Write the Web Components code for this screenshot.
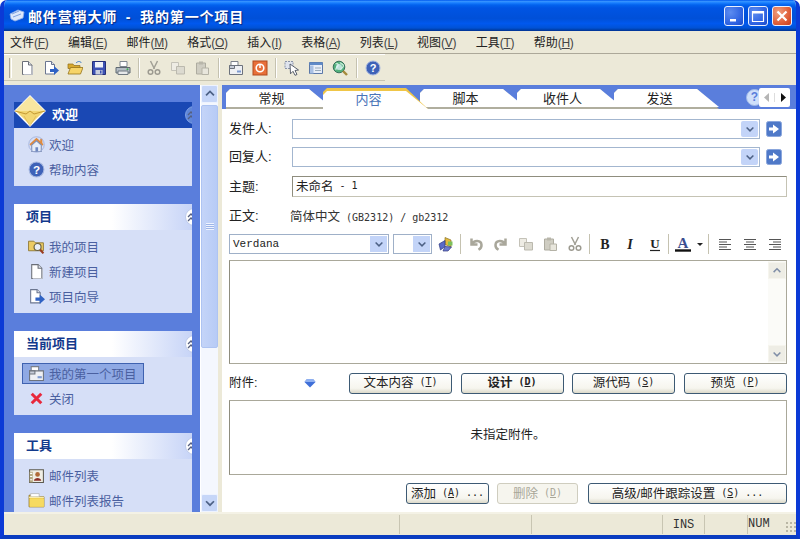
<!DOCTYPE html>
<html lang="zh">
<head>
<meta charset="utf-8">
<title>邮件营销大师</title>
<style>
html,body{margin:0;height:100%;overflow:hidden;background:#fff}
body{font:12px "Liberation Sans","Noto Sans CJK SC",sans-serif;color:#222}
.latin{font:10px "DejaVu Sans Mono",monospace;white-space:pre}
</style>
</head>
<body>
<xp-window>
  <xp-titlebar>邮件营销大师 - 我的第一个项目</xp-titlebar>
  <xp-menubar>
    <xp-menu key="F">文件</xp-menu><xp-menu key="E">编辑</xp-menu><xp-menu key="M">邮件</xp-menu>
    <xp-menu key="O">格式</xp-menu><xp-menu key="I">插入</xp-menu><xp-menu key="A">表格</xp-menu>
    <xp-menu key="L">列表</xp-menu><xp-menu key="V">视图</xp-menu><xp-menu key="T">工具</xp-menu>
    <xp-menu key="H">帮助</xp-menu>
  </xp-menubar>
  <xp-toolbar>
    <xp-tool icon="page"></xp-tool><xp-tool icon="pagenext"></xp-tool><xp-tool icon="open"></xp-tool><xp-tool icon="save"></xp-tool><xp-tool icon="print"></xp-tool>
    <xp-sep w="7"></xp-sep>
    <xp-tool icon="cut"></xp-tool><xp-tool icon="copy"></xp-tool><xp-tool icon="paste"></xp-tool>
    <xp-sep w="10"></xp-sep>
    <xp-tool icon="project"></xp-tool><xp-tool icon="stop"></xp-tool>
    <xp-sep w="8"></xp-sep>
    <xp-tool icon="pointer"></xp-tool><xp-tool icon="panel"></xp-tool><xp-tool icon="globe"></xp-tool>
    <xp-sep w="9"></xp-sep>
    <xp-tool icon="help"></xp-tool>
  </xp-toolbar>
  <xp-split>
    <xp-sidebar slot="side">
      <xp-panel label="欢迎" primary>
        <xp-task icon="home">欢迎</xp-task>
        <xp-task icon="help">帮助内容</xp-task>
      </xp-panel>
      <xp-panel label="项目">
        <xp-task icon="foldersearch">我的项目</xp-task>
        <xp-task icon="page">新建项目</xp-task>
        <xp-task icon="pagenext">项目向导</xp-task>
      </xp-panel>
      <xp-panel label="当前项目">
        <xp-task icon="project" selected>我的第一个项目</xp-task>
        <xp-task icon="close">关闭</xp-task>
      </xp-panel>
      <xp-panel label="工具">
        <xp-task icon="contacts">邮件列表</xp-task>
        <xp-task icon="folder">邮件列表报告</xp-task>
      </xp-panel>
    </xp-sidebar>
    <xp-tabs>
      <xp-tab>常规</xp-tab><xp-tab active>内容</xp-tab><xp-tab>脚本</xp-tab><xp-tab>收件人</xp-tab><xp-tab>发送</xp-tab>
    </xp-tabs>
    <xp-content>
      <xp-field label="发件人:" style="margin-bottom:8px"><xp-combo></xp-combo><xp-tool-arrow></xp-tool-arrow></xp-field>
      <xp-field label="回复人:" style="margin-bottom:9px"><xp-combo></xp-combo><xp-tool-arrow></xp-tool-arrow></xp-field>
      <xp-field label="主题:" style="margin-bottom:10px"><xp-input>未命名<span class="latin"> - 1</span></xp-input></xp-field>
      <xp-field label="正文:" style="margin-bottom:7px;height:18px"><xp-plain>简体中文<span class="latin"> (GB2312) / gb2312</span></xp-plain></xp-field>
      <xp-editbar>
        <xp-select w="160" style="margin-right:4px">Verdana</xp-select>
        <xp-select w="39" style="margin-right:2px"></xp-select>
        <xp-tool icon="styles" w="24"></xp-tool>
        <xp-sep w="6"></xp-sep>
        <xp-tool icon="undo" w="24.7"></xp-tool><xp-tool icon="redo" w="24.7"></xp-tool><xp-tool icon="copy" w="24.7"></xp-tool><xp-tool icon="paste" w="24.7"></xp-tool><xp-tool icon="cut" w="24.7"></xp-tool>
        <xp-sep w="5.5"></xp-sep>
        <xp-tool icon="bold" w="24.7"></xp-tool><xp-tool icon="italic" w="24.7"></xp-tool><xp-tool icon="underline" w="24.7"></xp-tool>
        <xp-sep w="4"></xp-sep>
        <xp-tool icon="color" w="24"></xp-tool><xp-tool icon="drop" w="10"></xp-tool>
        <xp-sep w="8"></xp-sep>
        <xp-tool icon="alignleft" w="24.7"></xp-tool><xp-tool icon="aligncenter" w="24.7"></xp-tool><xp-tool icon="alignright" w="24.7"></xp-tool>
      </xp-editbar>
      <xp-editor></xp-editor>
      <xp-attach-row>
        <xp-button key="T">文本内容</xp-button>
        <xp-button key="D" strong>设计</xp-button>
        <xp-button key="S">源代码</xp-button>
        <xp-button key="P">预览</xp-button>
      </xp-attach-row>
      <xp-box>未指定附件。</xp-box>
      <xp-actions>
        <xp-button key="A" dots style="width:83px">添加</xp-button>
        <xp-button key="D" disabled style="width:81px">删除</xp-button>
        <xp-button key="S" dots style="width:199px;margin-left:2px">高级/邮件跟踪设置</xp-button>
      </xp-actions>
    </xp-content>
  </xp-split>
  <xp-statusbar></xp-statusbar>
</xp-window>

<script>
// 16x16 icons, drawn by hand
const ICONS = {
  page: `<path d="M3.500 1.500h6l3.500 3.500v9.500h-9.500z" fill="#fff" stroke="#6b6f78"/><path d="M9.500 1.500v3.500h3.500" fill="#dfe3ea" stroke="#6b6f78"/><path d="M4.500 14.500h9V6" fill="none" stroke="#b9bcc4"/>`,
  pagenext: `<path d="M2.500 1.500h6l3 3v9.500h-9z" fill="#fff" stroke="#6b7690"/><path d="M8.500 1.500v3h3" fill="#dfe3ea" stroke="#6b7690"/><path d="M7 9h4V6l5 4.500-5 4.500v-3H7z" fill="#2f62c4"/>`,
  open: `<path d="M1 4h5l1 1.500h6v3H1z" fill="#d8a92e" stroke="#8f6d18" stroke-width=".7"/><path d="M1 14l2.500-6.500H16L13.500 14z" fill="#f6d468" stroke="#96741c" stroke-width=".8"/><path d="M9 3c2-2 4-2 5.500 0" fill="none" stroke="#3a7ac8"/>`,
  save: `<path d="M1.500 1.500h13v13h-13z" fill="#3d52b4" stroke="#252f78"/><path d="M4 2h8v5.500H4z" fill="#f0f2f8"/><path d="M4.500 10h7v4.500h-7z" fill="#c8cede"/><path d="M9 10.500h1.500v3H9z" fill="#3d52b4"/>`,
  print: `<path d="M5 1.500h7v5H5z" fill="#fff" stroke="#7f8790"/><path d="M1 7.500h14v5.500H1z" fill="#b4bcc4" stroke="#5f6870"/><path d="M3 11h10v3.500H3z" fill="#e6e8ea" stroke="#6f7880"/><circle cx="12.500" cy="9.300" r="1" fill="#3fae52"/>`,
  cut: `<path d="M4.500 1l4 8M11.500 1l-4 8" stroke="#a2a096" stroke-width="1.500" fill="none"/><circle cx="4.500" cy="12" r="2.300" fill="none" stroke="#9c9a90" stroke-width="1.500"/><circle cx="11.500" cy="12" r="2.300" fill="none" stroke="#9c9a90" stroke-width="1.500"/>`,
  copy: `<path d="M1.500 2.500h7v8h-7z" fill="#eeece4" stroke="#c4c2b8"/><path d="M6.500 6.500h8v7.500h-8z" fill="#dcdad0" stroke="#bbb9ae"/>`,
  paste: `<path d="M2.500 3h9v11h-9z" fill="#cfcdc2" stroke="#aeaca0"/><path d="M5 1.500h4v3H5z" fill="#b8b6aa"/><path d="M8 8h6.500v6.500H8z" fill="#e8e6dc" stroke="#b4b2a6"/>`,
  project: `<path d="M3 1.500h7v5H3z" fill="#fff" stroke="#7b818c"/><path d="M1.500 5.500h13v9h-13z" fill="#eef0f4" stroke="#6c727c"/><path d="M1.500 5.500h5v3h-5z" fill="#c6ccd8" stroke="#6c727c"/><path d="M9 10.500h4v2H9z" fill="#7d9ad0"/>`,
  stop: `<rect x="1" y="1" width="14" height="14" fill="#e8703a" stroke="#b04b1e"/><circle cx="8" cy="8" r="3.800" fill="none" stroke="#fff" stroke-width="1.600"/><path d="M8 4v4" stroke="#fff" stroke-width="1.500"/>`,
  pointer: `<path d="M1 1.500h8v7H1z" fill="#dfe4ee" stroke="#8a94a8" stroke-dasharray="2 1"/><path d="M6 4l8.500 6-3.500.500 2 4-2 .800-2-4-2.500 2.500z" fill="#fff" stroke="#4a5160" stroke-width=".9"/>`,
  panel: `<path d="M1.500 2.500h13v11h-13z" fill="#e8eef8" stroke="#5b78a8"/><path d="M1.500 2.500h13v2.500h-13z" fill="#5f8ac8"/><path d="M2 5.500h3.500v8H2z" fill="#a8c0e4"/><path d="M7 8h6M7 10.500h6" stroke="#9ab"/>`,
  globe: `<circle cx="7" cy="7" r="5.800" fill="#52b07c" stroke="#38705c"/><path d="M3.500 4c2-1 3 0 2.500 1.500S3 8 4 10M8 2.500c1 1.500 3 1.500 3.500 3S9 8 8.500 10" fill="none" stroke="#c8ecd8" stroke-width="1.300"/><circle cx="7" cy="7" r="3" fill="#e3f1fb" opacity=".75"/><path d="M11 11l4 4" stroke="#a58a3c" stroke-width="2.400"/>`,
  help: `<circle cx="8" cy="8" r="7" fill="#3e62b8" stroke="#a7b8e0"/><text x="8" y="12" text-anchor="middle" font-family="Liberation Sans" font-weight="700" font-size="11" fill="#fff">?</text>`,
  home: `<path d="M2 8.500L8 3l6 5.500" fill="none" stroke="#e08a3c" stroke-width="2"/><path d="M3.500 8.500L8 4.500l4.500 4v6h-9z" fill="#e6edf8" stroke="#7f8fb4"/><path d="M7 10.500h2.500v4H7z" fill="#6f88c0"/><path d="M11.500 2.500h2v4h-2z" fill="#e08a3c"/><circle cx="8" cy="8" r="7.300" fill="none" stroke="#9fb0dc" stroke-width=".8"/>`,
  foldersearch: `<path d="M.500 3h5l1.500 1.500h7.500V12H.500z" fill="#eccb64" stroke="#8a7430" stroke-width=".8"/><circle cx="9" cy="8.500" r="3.300" fill="#e8eef8" stroke="#6b6240" stroke-width="1.100"/><path d="M11.500 11l3 3.500" stroke="#9a3c20" stroke-width="2"/>`,
  close: `<path d="M3.500 3.500l9 9M12.500 3.500l-9 9" stroke="#e8283c" stroke-width="2.800"/>`,
  contacts: `<path d="M1.500 2.500h13v12h-13z" fill="#f0eee4" stroke="#5c5a50"/><path d="M1.500 4.500h3v10h-3z" fill="#b4a880"/><circle cx="9" cy="7" r="2.200" fill="#b06a38"/><path d="M5.500 13c.500-3.500 6.500-3.500 7 0z" fill="#8a2f28"/><path d="M2 6h2M2 9h2M2 12h2" stroke="#fff"/>`,
  folder: `<path d="M1 3h5.500L8 4.500h7V14H1z" fill="#e9c242" stroke="#8c7428" stroke-width=".8"/><path d="M1.500 6h13.500v8H1.500z" fill="#f6da62"/><path d="M2.500 1.500h8v3h-8z" fill="#fff" stroke="#a8a8a8" stroke-width=".6"/><path d="M1 5h14" stroke="#fff6c0"/>`,
  styles: `<path d="M7 1.500l6 2.500v7l-6-2.500z" fill="#e2b93c" stroke="#8a7428" stroke-width=".7"/><path d="M1 8l6-3.500v6L2.500 14z" fill="#5a6ac8" stroke="#2e3a80" stroke-width=".7"/><path d="M7 10.500l6.500.500L10 15H5z" fill="#6c7ad0" stroke="#30397c" stroke-width=".7"/><path d="M10 5.500h4.500v4H10z" fill="#7cc05c"/>`,
  undo: `<path d="M3.500 2.500v6H9.500M3.800 8.200C6 3.800 13 3.800 13.500 8.800c.2 2-1 3.800-3 5" fill="none" stroke="#a9a79b" stroke-width="2.500"/>`,
  redo: `<path d="M12.500 2.500v6H6.500M12.200 8.200C10 3.800 3 3.800 2.500 8.800c-.2 2 1 3.800 3 5" fill="none" stroke="#a9a79b" stroke-width="2.500"/>`,
  bold: `<text x="8" y="13" text-anchor="middle" font-family="Liberation Serif" font-weight="700" font-size="14" fill="#222">B</text>`,
  italic: `<text x="8" y="13" text-anchor="middle" font-family="Liberation Serif" font-weight="700" font-style="italic" font-size="14" fill="#222">I</text>`,
  underline: `<text x="8" y="12" text-anchor="middle" font-family="Liberation Serif" font-weight="700" font-size="13" fill="#222">U</text><path d="M3 14.500h10" stroke="#222" stroke-width="1.200"/>`,
  color: `<text x="8" y="11.500" text-anchor="middle" font-family="Liberation Serif" font-weight="700" font-size="15" fill="#3c4f90">A</text><path d="M0 14.500h16" stroke="#111" stroke-width="2.400"/>`,
  drop: `<path d="M5 7h6l-3 3z" fill="#222"/>`,
  alignleft: `<path d="M2 3.500h12M2 6h8M2 8.500h12M2 11h8M2 13.500h12" stroke="#555" stroke-width="1.200"/>`,
  aligncenter: `<path d="M2 3.500h12M4 6h8M2 8.500h12M4 11h8M2 13.500h12" stroke="#555" stroke-width="1.200"/>`,
  alignright: `<path d="M2 3.500h12M6 6h8M2 8.500h12M6 11h8M2 13.500h12" stroke="#555" stroke-width="1.200"/>`,
  chevup: `<path d="M3.500 9.500L8 5l4.500 4.500" fill="none" stroke="#4d6185" stroke-width="2"/>`,
  chevdown: `<path d="M3.500 6L8 10.500 12.500 6" fill="none" stroke="#4d6185" stroke-width="2"/>`
};
const svg = (name, size = 16) => `<svg width="${size}" height="${size}" viewBox="0 0 16 16" style="display:block">${ICONS[name] || ''}</svg>`;

// small helper, most elements are just a style + some markup
function define(tag, html, init) {
  const template = document.createElement('template');
  template.innerHTML = html;
  customElements.define(tag, class extends HTMLElement {
    constructor() {
      super();
      this.attachShadow({mode: 'open'}).appendChild(template.content.cloneNode(true));
    }
    connectedCallback() { if (init) init(this, this.shadowRoot); }
  });
}

define('xp-window', `<style>
:host{display:flex;flex-direction:column;width:800px;height:539px;box-sizing:border-box;border:solid #0b3ad6;border-width:0 4px 4px;border-bottom-color:#0a3cc0;border-radius:7px 7px 0 0;background:#ece9d8;overflow:hidden}
</style><slot></slot>`);

define('xp-titlebar', `<style>
:host{display:flex;align-items:center;height:31px;flex:none;margin:0 -4px;padding:0 8px 0 8px;color:#fff;
  background:linear-gradient(#0058ee 0,#3593ff 5%,#1a80ff 9%,#0262ee 16%,#0054e3 26%,#0050d8 60%,#0058ee 76%,#0052d6 90%,#0040ab 96%,#003092 100%)}
.logo{width:18px;height:16px;margin-right:2px}
.text{font:700 14px "Liberation Sans","Noto Sans CJK SC",sans-serif;letter-spacing:.85px;text-shadow:1px 1px 1px #0a2a80;white-space:pre;word-spacing:4px}
.btns{margin-left:auto;display:flex;gap:4px}
.btn{width:20px;height:20px;box-sizing:border-box;border:1px solid #e8f0ff;border-radius:3px;background:radial-gradient(circle at 30% 30%,#5c8cf0,#2a5fe0 70%,#1a48c4);display:flex;align-items:center;justify-content:center}
.x{background:radial-gradient(circle at 30% 30%,#f0a080,#e0603a 60%,#c83c1c)}
</style>
<svg class="logo" viewBox="0 0 18 16"><path d="M2 6l8-4 6 2-1 6-8 3-4-2z" fill="#dce8fb" stroke="#8fb0e8" stroke-width=".8"/><path d="M4 6l7-3M5 9l8-3" stroke="#7ea2e0"/></svg>
<span class="text"><slot></slot></span>
<div class="btns">
  <div class="btn"><svg width="12" height="12"><path d="M2 9h6v2.500H2z" fill="#fff"/></svg></div>
  <div class="btn"><svg width="14" height="14"><path d="M1.500 2.500h11v10h-11z" fill="none" stroke="#fff" stroke-width="1.200"/><path d="M1.500 3.500h11" stroke="#fff" stroke-width="2"/></svg></div>
  <div class="btn x"><svg width="14" height="14"><path d="M2.500 2.500l9 9M11.500 2.500l-9 9" stroke="#fff" stroke-width="2.200"/></svg></div>
</div>`);

define('xp-menubar', `<style>
:host{display:flex;align-items:center;height:22px;flex:none;padding:0 0 1px 6px;gap:19.500px;border-bottom:1px solid #aca899;box-sizing:border-box;height:23px}
</style><slot></slot>`);

define('xp-menu', `<style>
:host{display:block;font-size:12px;white-space:nowrap;color:#222}
.k{letter-spacing:-.3px;color:#444}
</style><slot></slot><span class="k">(<u id="k"></u>)</span>`, (el, root) => {
  root.getElementById('k').textContent = el.getAttribute('key');
});

define('xp-toolbar', `<style>
:host{display:flex;align-items:center;height:27px;flex:none;width:381px;padding-left:2px;box-sizing:border-box;border-bottom:1px solid #c8c5b2;border-top:1px solid #fff;position:relative}
.grip{width:2px;height:20px;margin:0 3px 0 3px;border-left:1px solid #aca899;border-right:1px solid #fff}
</style><div class="grip"></div><slot></slot>`);

define('xp-tool', `<style>
:host{display:flex;justify-content:center;align-items:center;flex:none;width:24px;height:24px}
</style><span id="i"></span>`, (el, root) => {
  root.getElementById('i').innerHTML = svg(el.getAttribute('icon'));
  if (el.hasAttribute('w')) el.style.width = el.getAttribute('w') + 'px';
});

define('xp-sep', `<style>
:host{display:flex;justify-content:center;align-items:center;flex:none;height:24px}
i{display:block;width:1px;height:20px;background:#c5c2b0;border-right:1px solid #fff}
</style><i></i>`, el => { el.style.width = el.getAttribute('w') + 'px'; });

// sidebar on the left, scrollbar, then the slotted main column
define('xp-split', `<style>
:host{display:grid;grid-template-columns:196px 18px 4px 1fr;grid-template-rows:auto 1fr;flex:1;min-height:0;border-top:4px solid #ece9d8;overflow:hidden}
.side{grid-row:1/3;min-height:0;overflow:hidden}
.bar{grid-row:1/3;grid-column:2;display:flex;flex-direction:column;background:#f4f7fe;border-left:1px solid #fff}
.b{height:18px;flex:none;box-sizing:border-box;background:#c6d6f8;border:1px solid #eef3ff;border-radius:2px;display:flex;align-items:center;justify-content:center}
.thumb{height:243px;flex:none;margin-top:2px;background:linear-gradient(90deg,#c4d4f8,#b7cbf6);border:1px solid #aec4f2;border-radius:2px;box-sizing:border-box;display:flex;align-items:center;justify-content:center}
.thumb i{display:block;width:8px;height:7px;background:repeating-linear-gradient(#eef3ff 0 1px,#9db5e8 1px 2px)}
.sp{flex:1}
.main{grid-column:4;grid-row:1/3;display:flex;flex-direction:column;min-width:0;min-height:0}
</style>
<div class="side"><slot name="side"></slot></div>
<div class="bar"><div class="b" id="u"></div><div class="thumb"><i></i></div><div class="sp"></div><div class="b" id="d"></div></div>
<div class="main"><slot></slot></div>`, (el, root) => {
  root.getElementById('u').innerHTML = svg('chevup', 14);
  root.getElementById('d').innerHTML = svg('chevdown', 14);
});

define('xp-sidebar', `<style>
:host{display:flex;flex-direction:column;gap:18px;height:100%;box-sizing:border-box;padding:17px 8px 0 10px;background:#5a7edc;overflow:hidden;position:relative}
.logo{position:absolute;left:10px;top:10px;width:32px;height:32px;z-index:2}
</style><svg class="logo" viewBox="0 0 32 32"><path d="M16 1l15 15-15 15L1 16z" fill="#f2d673" stroke="#fff" stroke-width="1.400"/><path d="M16 1L1 16h30z" fill="#f8e6a0"/><path d="M1 16l11 3 4-3 4 3 11-3" fill="none" stroke="#c49a34"/><path d="M16 31l-6-10M16 31l6-10" stroke="#d8b048" stroke-width=".6"/></svg><slot></slot>`);

define('xp-panel', `<style>
:host{display:block;flex:none;overflow:hidden}
.h{height:26px;box-sizing:border-box;padding:0 0 4px 12px;display:flex;align-items:center;font:700 13px "Liberation Sans","Noto Sans CJK SC",sans-serif;color:#12398c;background:linear-gradient(90deg,#fff 55%,#c7d4f7);position:relative;overflow:hidden}
:host([primary]) .h{background:#1a48b4;color:#fff;padding-left:38px}
.c{position:absolute;left:171px;top:4px;width:18px;height:18px;border-radius:50%;background:#fff;border:1px solid #bcc9ea;box-sizing:border-box}
:host([primary]) .c{background:#5f86d8;border-color:#7fa0e4}
.c svg{display:block;margin:3px 0 0 1px}
.b{background:#d6dff7;padding:4px 0}
</style>
<div class="h"><span id="t"></span><div class="c"><svg width="10" height="10"><path d="M1 5l3-3 3 3M1 9l3-3 3 3" fill="none" stroke="#555f80" stroke-width="1.300"/></svg></div></div>
<div class="b"><slot></slot></div>`, (el, root) => {
  root.getElementById('t').textContent = el.getAttribute('label');
});

define('xp-task', `<style>
:host{display:flex;align-items:center;height:25px;padding-left:14px;font-size:12.500px;color:#4a60a0;box-sizing:border-box;position:relative}
#i{width:18px;margin-right:3px;display:block;position:relative}
:host([selected]) .s{position:absolute;left:8px;width:122px;top:2px;bottom:2px;box-sizing:border-box;background:#8fa9e4;border:1px solid #3f62b0}
span{position:relative;margin-top:-1px}
</style><div class="s"></div><div id="i"></div><span><slot></slot></span>`, (el, root) => {
  root.getElementById('i').innerHTML = svg(el.getAttribute('icon'), 17);
});

define('xp-tabs', `<style>
:host{display:flex;height:24px;flex:none;background:#5a7edc;padding-left:4px;position:relative}
.more{margin-left:auto;display:flex;align-items:center;margin-right:6px;position:relative}
.q{width:17px;height:17px;border-radius:50%;background:#cfe0fa;border:1px solid #9fb8e8;box-sizing:border-box;color:#5a7edc;font:700 12px/15px "Liberation Sans",sans-serif;text-align:center;margin-right:-4px}
.nav{width:31px;height:19px;background:#fff;display:flex;position:relative;align-items:center;border-radius:2px}
.nav i{flex:1;display:flex;justify-content:center}
</style><slot></slot>
<div class="more"><div class="q">?</div><div class="nav"><i><svg width="6" height="9"><path d="M5 0v9L0 4.500z" fill="#b5b5b5"/></svg></i><i style="border-left:1px solid #ddd"><svg width="6" height="9"><path d="M1 0v9l5-4.500z" fill="#111"/></svg></i></div></div>`);

define('xp-tab', `<style>
:host{display:block;width:105px;height:20px;margin:4px 0 0 -8px;flex:none;position:relative}
:host(:first-child){margin-left:0}
.edge,.face{position:absolute;left:0;right:0;top:0;clip-path:polygon(0 100%,0 4px,4px 0,calc(100% - 22px) 0,100% 100%)}
.edge{bottom:0;background:#b0ae9e}
.face{bottom:2px;background:#fff;display:flex;align-items:center;justify-content:center;padding:0 14px 2px 0;box-sizing:border-box;font-size:13px;color:#222}
:host([active]){height:21px;margin-top:3px}
:host([active]) .edge{background:#f0c648}
:host([active]) .face{top:3px;bottom:0;color:#4a74b8;padding-bottom:3px}
</style><div class="edge"></div><div class="face"><slot></slot></div>`, el => {
  const n = [...el.parentNode.children].indexOf(el);
  el.style.zIndex = el.hasAttribute('active') ? 20 : 10 - n;
});

define('xp-content', `<style>
:host{display:flex;flex-direction:column;flex:1;min-height:0;background:#fff;padding:10px 9px 0 7px;box-sizing:border-box}
</style><slot></slot>`);

define('xp-field', `<style>
:host{display:grid;grid-template-columns:63px 1fr;align-items:center;flex:none}
.l{font-size:13px;color:#222;margin-top:-3px}
.r{display:flex;align-items:center;min-width:0}
</style><div class="l" id="l"></div><div class="r"><slot></slot></div>`, (el, root) => {
  root.getElementById('l').textContent = el.getAttribute('label');
});

define('xp-combo', `<style>
:host{display:flex;flex:1;height:20px;box-sizing:border-box;border:1px solid #a3b6cf;background:#fff;justify-content:flex-end;align-items:center;padding-right:1px}
.a{width:17px;height:16px;background:#c3d4f8;border-radius:2px;display:flex;align-items:center;justify-content:center}
</style><div class="a" id="a"></div>`, (el, root) => { root.getElementById('a').innerHTML = svg('chevdown', 12); });

define('xp-tool-arrow', `<style>
:host{display:block;width:16px;height:16px;margin:0 5px 0 6px;flex:none}
svg{display:block}
</style><svg width="16" height="16"><rect x=".5" y=".5" width="15" height="15" rx="2" fill="#4f79c8" stroke="#8aa6dc"/><path d="M3 6.500h4V3.500L13 8l-6 4.500v-3H3z" fill="#fff"/></svg>`);

define('xp-input', `<style>
:host{display:flex;flex:1;height:21px;align-items:center;box-sizing:border-box;border:1px solid #8f8d7e;border-bottom-color:#c5c3b4;border-right-color:#c5c3b4;padding:0 0 3px 3px;font-size:12.500px;color:#222;white-space:pre}
</style><slot></slot>`);

define('xp-plain', `<style>
:host{display:block;margin:-2px 0 0 -2px;font-size:12.500px;color:#333;white-space:pre}
</style><slot></slot>`);

define('xp-editbar', `<style>
:host{display:flex;align-items:center;height:24px;flex:none;margin-bottom:4px}
</style><slot></slot>`);

define('xp-select', `<style>
:host{display:flex;align-items:center;height:20px;flex:none;box-sizing:border-box;border:1px solid #9fb0c8;background:#fff;padding:0 1px 0 3px;font:11px "Liberation Mono",monospace;color:#222}
.a{margin-left:auto;width:17px;height:16px;background:#c3d4f8;display:flex;align-items:center;justify-content:center}
</style><slot></slot><div class="a" id="a"></div>`, (el, root) => {
  el.style.width = el.getAttribute('w') + 'px';
  root.getElementById('a').innerHTML = svg('chevdown', 12);
});

define('xp-editor', `<style>
:host{display:flex;justify-content:flex-end;height:104px;flex:none;box-sizing:border-box;border:1px solid #aaa89a;border-left-color:#8f8d7e;margin-bottom:8px;background:#fff}
.bar{width:18px;display:flex;flex-direction:column;justify-content:space-between;background:#fbfbf8;padding:1px 0}
.b{height:17px;background:#e9e8de;border:1px solid #f4f3ea;box-sizing:border-box;display:flex;align-items:center;justify-content:center;opacity:.7}
</style><div class="bar"><div class="b" id="u"></div><div class="b" id="d"></div></div>`, (el, root) => {
  root.getElementById('u').innerHTML = svg('chevup', 12);
  root.getElementById('d').innerHTML = svg('chevdown', 12);
});

define('xp-attach-row', `<style>
:host{display:grid;grid-template-columns:111.500px repeat(4,103px);column-gap:8.500px;align-items:center;height:21px;flex:none;margin-bottom:7px;font-size:12.500px}
.l{display:flex;align-items:center;color:#222;padding-bottom:3px}
svg{margin:3px 0 0 47px}
</style><div class="l">附件:<svg width="12" height="10"><path d="M6 9.500L.5 4 3 1h6l2.500 3z" fill="#3f6fd8"/><path d="M3 1h6l2.500 3H.5z" fill="#8fb0f0"/></svg></div><slot></slot>`);

define('xp-button', `<style>
:host{display:flex;align-items:center;justify-content:center;height:21px;box-sizing:border-box;border:1px solid #3d5a74;border-radius:3px;padding-bottom:3px;background:linear-gradient(#fff,#f6f5ee 75%,#dcd9ca);font-size:12.500px;color:#222;white-space:pre;flex:none}
:host([strong]){font-weight:700}
:host([disabled]){border-color:#cfcdbf;color:#a8a698;background:#f6f5ee}
.k{font-family:"DejaVu Sans Mono",monospace;font-size:10px}
</style><slot></slot><span class="k" id="k"></span>`, (el, root) => {
  const k = root.getElementById('k');
  k.innerHTML = ' (<u>' + el.getAttribute('key') + '</u>)' + (el.hasAttribute('dots') ? ' ...' : '');
});

define('xp-box', `<style>
:host{display:flex;align-items:center;justify-content:center;height:75px;flex:none;box-sizing:border-box;border:1px solid #aaa89a;border-left-color:#8f8d7e;margin-bottom:8px;padding-bottom:9px;font-size:12.500px;color:#222}
</style><slot></slot>`);

define('xp-actions', `<style>
:host{display:flex;justify-content:flex-end;gap:8px;height:21px;flex:none}
</style><slot></slot>`);

define('xp-statusbar', `<style>
:host{display:flex;height:23px;flex:none;box-sizing:border-box;border-top:2px solid #f4f2e6;font:12px "Liberation Mono",monospace;color:#333}
div{box-sizing:border-box;border-right:1px solid #c8c5b2;margin:1px 0;display:flex;align-items:center;justify-content:center;flex:none}
.grip{border:0;flex:1;justify-content:flex-end;align-items:flex-end;padding:0 0 2px}
.grip i{display:block;width:11px;height:11px;background:radial-gradient(circle,#b9b6a4 1px,transparent 1.200px) 0 0/4px 4px}
span{margin:auto auto auto 0}
</style>
<div style="width:396px"></div><div style="width:132px"></div><div style="width:131px"></div><div style="width:42px">INS</div><div style="width:43px"></div><div class="grip"><span>NUM</span><i></i></div>`);
</script>
</body>
</html>
